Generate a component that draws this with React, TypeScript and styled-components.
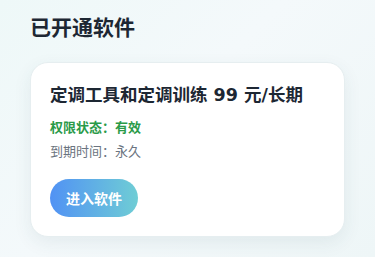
import styled, { createGlobalStyle } from "styled-components";

const GlobalStyle = createGlobalStyle`
    html, body {
        margin: 0;
        padding: 0;
    }

    body {
        background: linear-gradient(135deg, #eef8f8 0%, #f4f9fb 45%, #eef6f7 100%);
        font-family: "DejaVu Sans", "Noto Sans CJK SC", sans-serif;
        min-height: 257px;
    }
`;

const Page = styled.main`
    padding: 13px 30px 20px;
`;

const PageTitle = styled.h2`
    color: #1d2733;
    font-size: 21px;
    font-weight: 700;
    line-height: 30px;
    margin: 0 0 19px;
`;

const Card = styled.section`
    background: #ffffff;
    border: 1px solid #e6eef0;
    border-radius: 18px;
    box-shadow: 0 6px 18px rgba(40, 80, 90, 0.08);
    padding: 19px 19px 19px;
`;

const CardTitle = styled.h3`
    color: #1d2733;
    font-size: 17.5px;
    font-weight: 700;
    line-height: 26px;
    margin: 0;
`;

const InfoLine = styled.p<{ $accent?: boolean }>`
    color: ${(p) => (p.$accent ? "#2a9a48" : "#6b7480")};
    font-size: 13px;
    font-weight: ${(p) => (p.$accent ? 700 : 400)};
    line-height: 20px;
    margin: ${(p) => (p.$accent ? "10px 0 0" : "4px 0 0")};
`;

const EnterButton = styled.button`
    background: linear-gradient(90deg, #5192f4 0%, #6fcdd5 100%);
    border: none;
    border-radius: 19px;
    color: #ffffff;
    cursor: pointer;
    font-family: inherit;
    font-size: 14px;
    font-weight: 700;
    height: 38px;
    margin-top: 17px;
    padding: 0 16px;
`;

function App() {
    return (
        <>
            <GlobalStyle />
            <Page>
                <PageTitle>已开通软件</PageTitle>
                <Card>
                    <CardTitle>定调工具和定调训练 99 元/长期</CardTitle>
                    <InfoLine $accent>权限状态：有效</InfoLine>
                    <InfoLine>到期时间：永久</InfoLine>
                    <EnterButton>进入软件</EnterButton>
                </Card>
            </Page>
        </>
    );
}

export default App;
